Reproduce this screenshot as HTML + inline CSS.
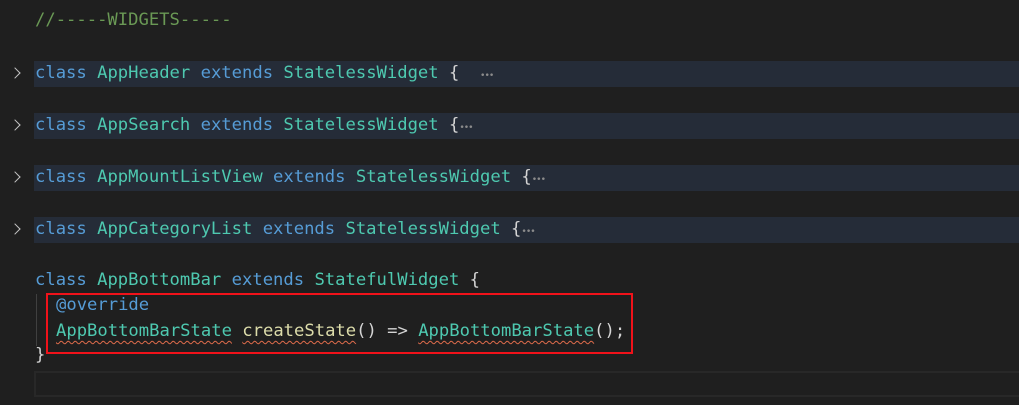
<!DOCTYPE html>
<html><head><style>
body{margin:0;width:1019px;height:405px;background:#1f1f1f;overflow:hidden;position:relative;font-family:"DejaVu Sans Mono","Liberation Mono",monospace;font-size:17.2px;}
.l{position:absolute;left:35px;height:26px;line-height:26px;white-space:pre;color:#d4d4d4;}
.hl{position:absolute;left:34px;right:0;height:26px;background:#252c38;}
.k{color:#569cd6}.t{color:#4ec9b0}.c{color:#6a9955}.f{color:#dcdcaa}.d{color:#8b8b8b;font-size:9px;letter-spacing:-1px}
.sq{text-decoration:underline wavy #e06c4b;text-decoration-thickness:1px;text-underline-offset:4px}
.ch{position:absolute;left:11px;width:7px;height:7px;border-right:1.5px solid #c5c5c5;border-top:1.5px solid #c5c5c5;transform:rotate(45deg)}
</style></head><body>
<div class="l c" style="top:7px">//-----WIDGETS-----</div>
<div class="hl" style="top:61px"></div><div class="ch" style="top:69px"></div>
<div class="l" style="top:60px"><span class="k">class</span> <span class="t">AppHeader</span> <span class="k">extends</span> <span class="t">StatelessWidget</span> {  <span class="d">•••</span></div>
<div class="hl" style="top:113px"></div><div class="ch" style="top:121px"></div>
<div class="l" style="top:112px"><span class="k">class</span> <span class="t">AppSearch</span> <span class="k">extends</span> <span class="t">StatelessWidget</span> {<span class="d">•••</span></div>
<div class="hl" style="top:165px"></div><div class="ch" style="top:173px"></div>
<div class="l" style="top:164px"><span class="k">class</span> <span class="t">AppMountListView</span> <span class="k">extends</span> <span class="t">StatelessWidget</span> {<span class="d">•••</span></div>
<div class="hl" style="top:217px"></div><div class="ch" style="top:225px"></div>
<div class="l" style="top:216px"><span class="k">class</span> <span class="t">AppCategoryList</span> <span class="k">extends</span> <span class="t">StatelessWidget</span> {<span class="d">•••</span></div>
<div class="l" style="top:267px"><span class="k">class</span> <span class="t">AppBottomBar</span> <span class="k">extends</span> <span class="t">StatefulWidget</span> {</div>
<div class="l" style="top:292px;left:56px"><span class="k">@override</span></div>
<div class="l" style="top:318px;left:56px"><span class="t sq">AppBottomBarState</span> <span class="f sq">createState</span>() =&gt; <span class="t sq">AppBottomBarState</span>();</div>
<div class="l" style="top:342px">}</div>
<div style="position:absolute;left:36px;top:294px;width:1px;height:52px;background:#404040"></div>
<div style="position:absolute;left:46px;top:293px;width:583px;height:57px;border:2px solid #f0121a"></div>
<div style="position:absolute;left:34px;top:371px;right:-2px;height:22px;border:2px solid #282828"></div>
</body></html>
